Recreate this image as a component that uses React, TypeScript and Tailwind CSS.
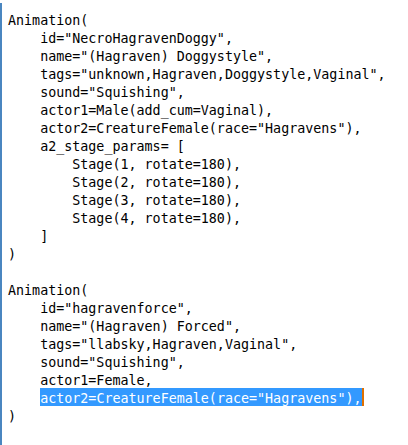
const block1 = [
  "Animation(",
  '    id="NecroHagravenDoggy",',
  '    name="(Hagraven) Doggystyle",',
  '    tags="unknown,Hagraven,Doggystyle,Vaginal",',
  '    sound="Squishing",',
  "    actor1=Male(add_cum=Vaginal),",
  '    actor2=CreatureFemale(race="Hagravens"),',
  "    a2_stage_params= [",
  "        Stage(1, rotate=180),",
  "        Stage(2, rotate=180),",
  "        Stage(3, rotate=180),",
  "        Stage(4, rotate=180),",
  "    ]",
  ")",
  "",
  "Animation(",
  '    id="hagravenforce",',
  '    name="(Hagraven) Forced",',
  '    tags="llabsky,Hagraven,Vaginal",',
  '    sound="Squishing",',
  "    actor1=Female,",
];

export default function App() {
  return (
    <div className="h-[445px] w-[408px] bg-white pt-[3px]">
      <div
        className="h-full border-l-2 border-[#4a86c0] pl-[6px] pt-[7px] text-[13.35px] text-black"
        style={{ fontFamily: '"DejaVu Sans Mono", "Liberation Mono", monospace' }}
      >
        {block1.map((line, i) => (
          <div key={i} className="h-[18px] whitespace-pre pt-[2px] leading-[18px]">
            {line}
          </div>
        ))}
        <div className="flex h-[18px] whitespace-pre leading-[18px]">
          <span className="block pt-[2px]">{"    "}</span>
          <span className="block h-[18px] bg-[#3399ff] pt-[2px] text-white">
            {'actor2=CreatureFemale(race="Hagravens"),'}
          </span>
          <span className="block h-[18px] w-[2px] bg-[#e07000]" />
        </div>
        <div className="h-[18px] whitespace-pre pt-[2px] leading-[18px]">)</div>
      </div>
    </div>
  );
}
